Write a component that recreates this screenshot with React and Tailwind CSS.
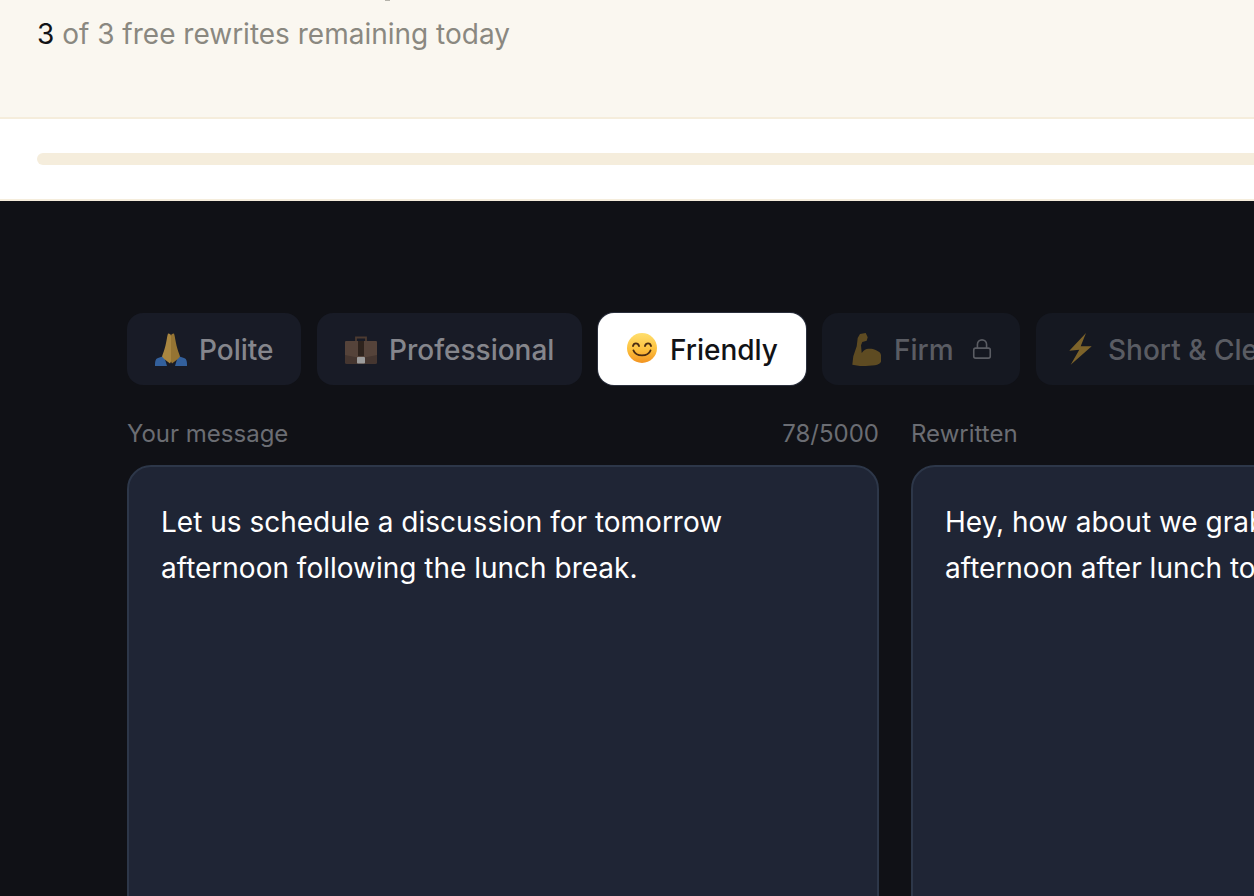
import React from "react";
import { Lock } from "lucide-react";

const PrayIcon = () => (
  <svg width="34" height="34" viewBox="0 0 34 34" className="shrink-0">
    <path d="M1 34c0-4 0-7 3-8l6-2 3 10z" fill="#33609c" />
    <path d="M33 34c0-4 0-7-3-8l-6-2-3 10z" fill="#33609c" />
    <path d="M14 1.500c-1 3-1.500 8-2.500 12-1 4-2.500 8-3.500 11 1.500 2 5 5 8 7l1-2V4c0-1.500-1-2.500-3-2.500z" fill="#a98640" />
    <path d="M20 1.500c1 3 1.500 8 2.500 12 1 4 2.500 8 3.500 11-1.500 2-5 5-8 7l-1-2V4c0-1.500 1-2.500 3-2.500z" fill="#957433" />
  </svg>
);

const BriefcaseIcon = () => (
  <svg width="34" height="34" viewBox="0 0 34 34" className="shrink-0">
    <path d="M12 10V5.500h10V10" fill="none" stroke="#4c3b31" strokeWidth="1.800" />
    <rect x="1" y="9" width="32" height="23" rx="1.500" fill="#453630" />
    <path d="M1 10.500C1 9.500 1.500 9 2.500 9h29c1 0 1.500.5 1.500 1.500V23l-10 2H11L1 23z" fill="#55433a" />
    <rect x="14" y="9" width="6" height="15" fill="#2e231d" />
    <rect x="13" y="25" width="8" height="6.500" rx="0.800" fill="#9c9c9c" />
  </svg>
);

const SmileIcon = () => (
  <svg width="34" height="34" viewBox="0 0 34 34" className="shrink-0">
    <defs>
      <linearGradient id="smile-face" x1="0" y1="0" x2="0" y2="1">
        <stop offset="0%" stopColor="#ffdf6e" />
        <stop offset="55%" stopColor="#fdc13e" />
        <stop offset="100%" stopColor="#f29320" />
      </linearGradient>
    </defs>
    <circle cx="17" cy="16" r="15" fill="url(#smile-face)" />
    <path d="M8 14c.8-3.500 5-3.500 6 0M20 14c1-3.500 5.200-3.500 6 0" fill="none" stroke="#4a2c12" strokeWidth="1.900" strokeLinecap="round" />
    <path d="M8.500 18.500c2.500 6.500 14.500 6.500 17 0" fill="none" stroke="#4a2c12" strokeWidth="1.900" strokeLinecap="round" />
  </svg>
);

const MuscleIcon = () => (
  <svg width="34" height="34" viewBox="0 0 34 34" className="shrink-0">
    <path
      d="M3.300 32.700L4.300 24.300 7.700 14.300 8.700 6 11 2 16.700 1 18.700 5.300 17.700 8.700 13.300 10 12 13.300 12.700 21C15 18 17 16.700 19.300 16.700 22 16.500 24.500 16.800 26.700 18 30 19.500 32 21 32 23.300V29.300C32 31 29 32.800 26 33.300L12.700 34.300z"
      fill="#5e4b22"
    />
  </svg>
);

const BoltIcon = () => (
  <svg width="34" height="34" viewBox="0 0 34 34" className="shrink-0">
    <path d="M23 1L6.300 18.700 16.300 17.700 7.700 32.700 28.700 14.300 17.700 14.300z" fill="#7d632a" />
  </svg>
);

const tones = [
  { label: "Polite", icon: <PrayIcon />, w: "w-[174px]", style: "bg-[#181b26] text-[#85868c]" },
  { label: "Professional", icon: <BriefcaseIcon />, w: "w-[265px]", style: "bg-[#181b26] text-[#85868c]" },
  { label: "Friendly", icon: <SmileIcon />, w: "w-[208px]", style: "bg-white text-[#111216] ring-1 ring-[#2a2f3c]" },
  { label: "Firm", icon: <MuscleIcon />, w: "w-[198px]", style: "bg-[#151821] text-[#5a5c63]", locked: true },
  { label: "Short & Clear", icon: <BoltIcon />, w: "w-[290px]", style: "bg-[#151821] text-[#5a5c63]" },
];

function ToneTab({ tone }) {
  return (
    <button className={`flex h-[72px] shrink-0 items-center gap-[11px] rounded-2xl pl-[27px] text-[28px] font-medium ${tone.w} ${tone.style}`}>
      {tone.icon}
      <span className="mt-[2px]">{tone.label}</span>
      {tone.locked && <Lock size={22} strokeWidth={1.75} className="ml-[6px]" />}
    </button>
  );
}

function Panel({ label, count, children }) {
  return (
    <div className="w-[752px] shrink-0">
      <div className="flex h-[34px] items-center justify-between text-2xl text-[#6b6d73]">
        <span>{label}</span>
        {count && <span>{count}</span>}
      </div>
      <div className="mt-[14px] h-[600px] rounded-3xl border-2 border-[#2d3749] bg-[#1f2535] px-8 pt-[32px] text-[28px] leading-[46px] text-white">
        {children}
      </div>
    </div>
  );
}

export default function App() {
  return (
    <div className="h-[896px] w-[1254px] overflow-hidden bg-[#101116] font-['Inter',sans-serif]">
      <div className="h-[119px] border-b-2 border-[#f5eddc] bg-[#faf7f0]">
        <div className="ml-[385px] h-px w-[5px] bg-[#b5b3ab]" />
        <p className="px-[37px] pt-[13px] text-[28px] leading-10 text-[#8a8880]">
          <span className="text-[#111216]">3</span> of 3 free rewrites remaining today
        </p>
      </div>
      <div className="flex h-[82px] items-center border-b-2 border-[#f5eddc] bg-white pl-[37px]">
        <div className="h-3 w-full rounded-l-full bg-[#f5eddc]" />
      </div>
      <div className="pl-[127px] pt-[112px]">
        <div className="flex gap-4">
          {tones.map((tone) => (
            <ToneTab key={tone.label} tone={tone} />
          ))}
        </div>
        <div className="mt-8 flex gap-8">
          <Panel label="Your message" count="78/5000">
            Let us schedule a discussion for tomorrow
            <br />
            afternoon following the lunch break.
          </Panel>
          <Panel label="Rewritten">
            Hey, how about we grab some time tomorrow
            <br />
            afternoon after lunch to chat?
          </Panel>
        </div>
      </div>
    </div>
  );
}
